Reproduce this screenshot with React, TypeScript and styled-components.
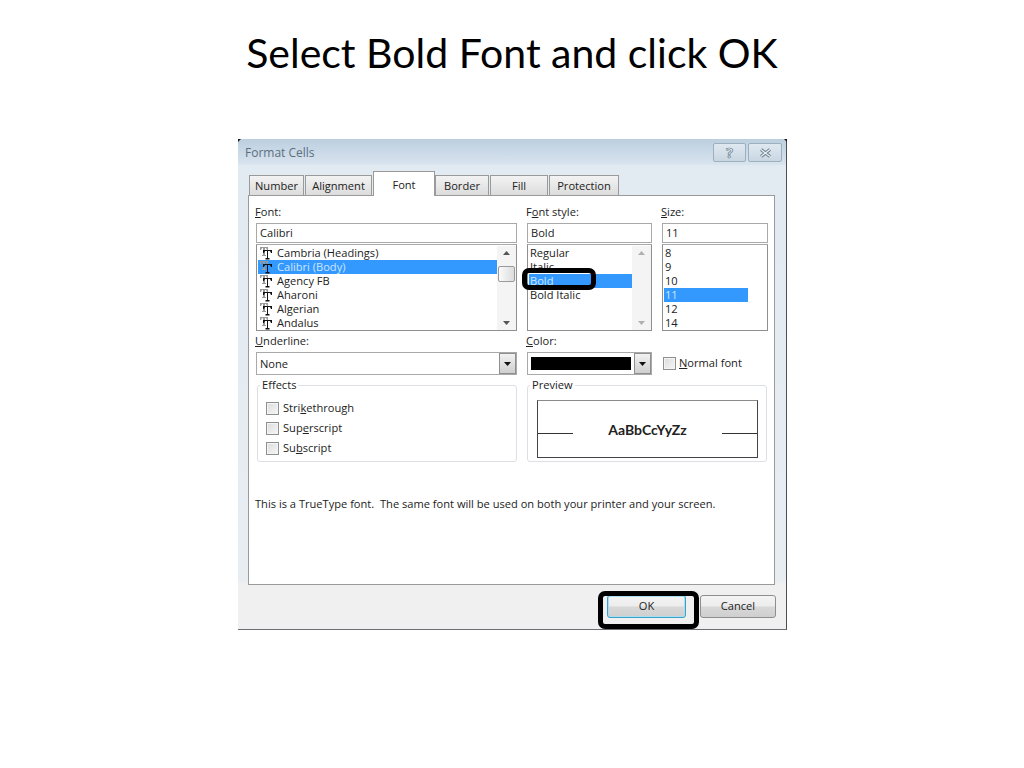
import React from "react";
import styled, { createGlobalStyle } from "styled-components";

const GlobalStyle = createGlobalStyle`
  html, body {
    margin: 0;
    padding: 0;
    background: #ffffff;
  }
`;

// Page
const Page = styled.div`
  width: 1024px;
  height: 768px;
  overflow: hidden;
  display: flex;
  flex-direction: column;
  align-items: center;
`;

const Title = styled.h1`
  margin: 0;
  height: 139px;
  padding-top: 25px;
  box-sizing: border-box;
  font: 400 41px/56px Lato, "Open Sans", sans-serif;
  color: #000000;
`;

// Dialog
const Dialog = styled.div`
  position: relative;
  width: 549px;
  height: 491px;
  box-sizing: border-box;
  margin-left: 1px;
  background: linear-gradient(#dfe8f1 0, #e2eaf2 34px, #e8edf2 440px, #f0f0f0 446px);
  border-right: 1px solid #4a4f55;
  border-bottom: 1px solid #6b6f73;
  font: 400 11.1px/14px "Open Sans", sans-serif;
  color: #222222;
  u {
    text-underline-offset: 1px;
  }
  /* the dark corner pixels left by the window capture */
  &::before,
  &::after {
    content: "";
    position: absolute;
    top: 0;
    width: 3px;
    height: 3px;
    background: #1c1c1c;
  }
  &::before {
    left: 0;
    clip-path: polygon(0 0, 100% 0, 0 100%);
  }
  &::after {
    right: -1px;
    clip-path: polygon(0 0, 100% 0, 100% 100%);
  }
`;

const TitleBar = styled.div`
  height: 26px;
  padding: 4px 4px 0 7px;
  display: flex;
  align-items: flex-start;
  justify-content: space-between;
  box-sizing: border-box;
  background: linear-gradient(#bccfe0, #d9e4ee);
`;

const DialogTitle = styled.div`
  font-size: 12px;
  line-height: 19px;
  color: #5a6f80;
`;

const CaptionButtons = styled.div`
  display: flex;
  gap: 2px;
`;

const CaptionButton = styled.div`
  width: ${(props: { $w: number }) => props.$w}px;
  height: 19px;
  box-sizing: border-box;
  display: flex;
  align-items: center;
  justify-content: center;
  border: 1px solid #9db0c0;
  border-radius: 2px;
  background: linear-gradient(#dfe8f0, #c9d7e3);
  font-weight: 700;
  font-size: 14px;
  color: #e8eef3;
  -webkit-text-stroke: 0.7px #66798a;
`;

// Tabs
const TabStrip = styled.div`
  height: 31px;
  margin-left: 11px;
  padding-top: 5px;
  box-sizing: border-box;
  display: flex;
  align-items: flex-end;
  position: relative;
  z-index: 1;
  margin-bottom: -1px;
`;

const Tab = styled.div<{ $w: number; $active?: boolean }>`
  width: ${(props) => props.$w}px;
  height: ${(props) => (props.$active ? 25 : 21)}px;
  box-sizing: border-box;
  display: flex;
  align-items: center;
  justify-content: center;
  border: 1px solid #9a9a9a;
  border-bottom: ${(props) => (props.$active ? "none" : "1px solid #9a9a9a")};
  padding-top: ${(props) => (props.$active ? 1 : 0)}px;
  margin-right: ${(props) => (props.$active ? 0 : 1)}px;
  background: ${(props) =>
    props.$active ? "#ffffff" : "linear-gradient(#f3f3f3, #dcdcdc)"};
`;

const Panel = styled.div`
  width: 527px;
  height: 390px;
  margin-left: 10px;
  padding: 9px 0 0 7px;
  box-sizing: border-box;
  background: #ffffff;
  border: 1px solid #9a9a9a;
`;

const FontGrid = styled.div`
  display: grid;
  grid-template-columns: 261px 125px 106px;
  column-gap: 10px;
`;

const Field = styled.div`
  display: flex;
  flex-direction: column;
`;

const FieldLabel = styled.div`
  height: 18px;
  margin-left: -1px;
`;

const TextBox = styled.div`
  height: 20px;
  box-sizing: border-box;
  padding: 2px 3px;
  margin-bottom: 1px;
  border: 1px solid #a9a9a9;
`;

const ListFrame = styled.div`
  position: relative;
  height: 87px;
  box-sizing: border-box;
  padding-top: 1px;
  display: flex;
  border: 1px solid #8f8f8f;
  border-top-color: #a9a9a9;
  margin-bottom: 3px;
`;

const Rows = styled.div`
  flex: 1;
  min-width: 0;
  margin-left: 1px;
  overflow: hidden;
`;

const Row = styled.div<{ $selected?: boolean; $right?: number }>`
  height: 14px;
  margin-right: ${(props) => props.$right ?? 0}px;
  padding-left: 1px;
  display: flex;
  align-items: center;
  gap: 4px;
  background: ${(props) => (props.$selected ? "#3399ff" : "transparent")};
  color: ${(props) => (props.$selected ? "#cfe6ff" : "#222222")};
`;

const ScrollBar = styled.div`
  width: 19px;
  display: flex;
  flex-direction: column;
  align-items: center;
  justify-content: space-between;
  padding: 5px 0;
  box-sizing: border-box;
  background: #f4f4f4;
  position: relative;
  color: ${(props: { $muted?: boolean }) => (props.$muted ? "#b0b0b0" : "#555555")};
`;

const Thumb = styled.div`
  position: absolute;
  top: 20px;
  left: 1px;
  width: 17px;
  height: 16px;
  box-sizing: border-box;
  border: 1px solid #9a9a9a;
  border-radius: 2px;
  background: linear-gradient(90deg, #fafafa, #dcdcdc);
`;

const Dropdown = styled.div`
  height: 23px;
  margin-bottom: 3px;
  padding-left: 3px;
  box-sizing: border-box;
  display: flex;
  align-items: center;
  justify-content: space-between;
  border: 1px solid #a9a9a9;
`;

const DropArrow = styled.div`
  width: 17px;
  align-self: stretch;
  display: flex;
  align-items: center;
  justify-content: center;
  box-sizing: border-box;
  border: 1px solid #8f8f8f;
  background: linear-gradient(#f2f2f2, #cfcfcf);
  color: #111111;
`;

const ColorSwatch = styled.div`
  flex: 1;
  height: 13px;
  margin-right: 3px;
  background: #000000;
`;

const CheckRow = styled.label`
  display: flex;
  align-items: center;
  gap: 4px;
  height: 14px;
`;

const CheckBox = styled.span`
  width: 13px;
  height: 13px;
  box-sizing: border-box;
  flex: none;
  border: 1px solid #8e8f8f;
  background: linear-gradient(135deg, #dcdcdc, #f6f6f6);
  box-shadow: inset 0 0 0 1px #f4f4f4;
`;

const NormalFont = styled(CheckRow)`
  margin: 22px 0 0 1px;
  gap: 3px;
`;

const GroupBox = styled.fieldset`
  margin: 0;
  padding: 0;
  height: 84px;
  box-sizing: border-box;
  border: 1px solid #dcdfe3;
  border-radius: 3px;
  min-width: 0;
  legend {
    margin-left: -7px;
    padding: 0 2px;
    line-height: 14px;
  }
`;

const EffectsBox = styled(GroupBox)`
  margin-left: 1px;
  width: 260px;
  display: flex;
  flex-direction: column;
  gap: 6px;
  padding: 9px 0 0 8px;
  legend {
    margin-left: -6px;
  }
`;

const PreviewColumn = styled.div`
  grid-column: span 2;
`;

const PreviewGroup = styled(GroupBox)`
  width: 240px;
  padding: 8px 8px 0 9px;
`;

const PreviewBox = styled.div`
  height: 58px;
  box-sizing: border-box;
  padding-top: 2px;
  display: flex;
  align-items: center;
  justify-content: space-between;
  border: 1px solid #444444;
  border-top-color: #8a8a8a;
`;

const PreviewLine = styled.span`
  width: 35px;
  height: 1px;
  margin-top: 7px;
  background: #333333;
`;

const PreviewText = styled.span`
  font: 700 14px/14px Lato, "Open Sans", sans-serif;
  color: #222222;
`;

const Note = styled.div`
  margin: 35px 0 0 -1px;
  white-space: pre;
`;

const Footer = styled.div`
  height: 44px;
  padding: 10px 10px 0 0;
  box-sizing: border-box;
  display: flex;
  justify-content: flex-end;
  gap: 14px;
`;

const PushButton = styled.div<{ $default?: boolean }>`
  position: relative;
  width: ${(props) => (props.$default ? 79 : 76)}px;
  height: 23px;
  padding-bottom: 1px;
  box-sizing: border-box;
  display: flex;
  align-items: center;
  justify-content: center;
  border: 1px solid ${(props) => (props.$default ? "#3c9fc8" : "#8e8e8e")};
  border-radius: 3px;
  background: linear-gradient(#f4f4f4 0, #ececec 48%, #d8d8d8 52%, #cfcfcf 100%);
  box-shadow: ${(props) => (props.$default ? "inset 0 0 0 1px #a8e0f2" : "none")};
`;

// Black call-outs drawn over the dialog
const Callout = styled.span`
  position: absolute;
  box-sizing: border-box;
  border: 5px solid #000000;
  border-radius: 7px;
  z-index: 2;
`;

const BoldCallout = styled(Callout)`
  left: -6px;
  top: 23px;
  width: 74px;
  height: 22px;
`;

const OkCallout = styled(Callout)`
  left: -10px;
  top: -5px;
  width: 101px;
  height: 38px;
`;

const ArrowUp = () => (
  <svg width="7" height="4" viewBox="0 0 7 4">
    <path d="M3.5 0L7 4H0z" fill="currentColor" />
  </svg>
);

const ArrowDown = () => (
  <svg width="7" height="4" viewBox="0 0 7 4">
    <path d="M0 0h7L3.5 4z" fill="currentColor" />
  </svg>
);

const TrueTypeIcon = () => (
  <svg width="14" height="14" viewBox="0 0 14 14">
    <path d="M1 1h8v3H8L7 2H6v7h1v1H3V9h1V2H3L2 4H1z" fill="#9a9a9a" />
    <path d="M4 4h9v3h-1l-1-2H9v7h1.5v1.5h-4V12H8V5H6L5 7H4z" fill="#111111" />
  </svg>
);

const fonts = ["Cambria (Headings)", "Calibri (Body)", "Agency FB", "Aharoni", "Algerian", "Andalus"];
const styles = ["Regular", "Italic", "Bold", "Bold Italic"];
const sizes = ["8", "9", "10", "11", "12", "14"];
const tabs = [
  { name: "Number", w: 55 },
  { name: "Alignment", w: 67 },
  { name: "Font", w: 62, active: true },
  { name: "Border", w: 54 },
  { name: "Fill", w: 58 },
  { name: "Protection", w: 70 },
];

function App() {
  return (
    <Page>
      <GlobalStyle />
      <Title>Select Bold Font and click OK</Title>
      <Dialog>
        <TitleBar>
          <DialogTitle>Format Cells</DialogTitle>
          <CaptionButtons>
            <CaptionButton $w={33}>?</CaptionButton>
            <CaptionButton $w={34}>
              <svg width="13" height="10" viewBox="0 0 13 10">
                <path d="M2 1.5l9 7M11 1.5l-9 7" stroke="#66798a" strokeWidth="3.2" fill="none" />
                <path d="M2 1.5l9 7M11 1.5l-9 7" stroke="#e8eef3" strokeWidth="1.4" fill="none" />
              </svg>
            </CaptionButton>
          </CaptionButtons>
        </TitleBar>
        <TabStrip>
          {tabs.map((tab) => (
            <Tab key={tab.name} $w={tab.w} $active={tab.active}>
              {tab.name}
            </Tab>
          ))}
        </TabStrip>
        <Panel>
          <FontGrid>
            <Field>
              <FieldLabel>
                <u>F</u>ont:
              </FieldLabel>
              <TextBox>Calibri</TextBox>
              <ListFrame>
                <Rows>
                  {fonts.map((name, i) => (
                    <Row key={name} $selected={i === 1}>
                      <TrueTypeIcon />
                      {name}
                    </Row>
                  ))}
                </Rows>
                <ScrollBar>
                  <ArrowUp />
                  <Thumb />
                  <ArrowDown />
                </ScrollBar>
              </ListFrame>
            </Field>
            <Field>
              <FieldLabel>
                F<u>o</u>nt style:
              </FieldLabel>
              <TextBox>Bold</TextBox>
              <ListFrame>
                <Rows>
                  {styles.map((name) => (
                    <Row key={name} $selected={name === "Bold"}>
                      {name}
                    </Row>
                  ))}
                </Rows>
                <ScrollBar $muted>
                  <ArrowUp />
                  <ArrowDown />
                </ScrollBar>
                <BoldCallout />
              </ListFrame>
            </Field>
            <Field>
              <FieldLabel>
                <u>S</u>ize:
              </FieldLabel>
              <TextBox>11</TextBox>
              <ListFrame>
                <Rows>
                  {sizes.map((name) => (
                    <Row key={name} $selected={name === "11"} $right={19}>
                      {name}
                    </Row>
                  ))}
                </Rows>
              </ListFrame>
            </Field>
            <Field>
              <FieldLabel>
                <u>U</u>nderline:
              </FieldLabel>
              <Dropdown>
                None
                <DropArrow>
                  <ArrowDown />
                </DropArrow>
              </Dropdown>
            </Field>
            <Field>
              <FieldLabel>
                <u>C</u>olor:
              </FieldLabel>
              <Dropdown>
                <ColorSwatch />
                <DropArrow>
                  <ArrowDown />
                </DropArrow>
              </Dropdown>
            </Field>
            <NormalFont>
              <CheckBox />
              <span>
                <u>N</u>ormal font
              </span>
            </NormalFont>
            <EffectsBox>
              <legend>Effects</legend>
              <CheckRow>
                <CheckBox />
                <span>
                  Stri<u>k</u>ethrough
                </span>
              </CheckRow>
              <CheckRow>
                <CheckBox />
                <span>
                  Sup<u>e</u>rscript
                </span>
              </CheckRow>
              <CheckRow>
                <CheckBox />
                <span>
                  Su<u>b</u>script
                </span>
              </CheckRow>
            </EffectsBox>
            <PreviewColumn>
              <PreviewGroup>
                <legend>Preview</legend>
                <PreviewBox>
                  <PreviewLine />
                  <PreviewText>AaBbCcYyZz</PreviewText>
                  <PreviewLine />
                </PreviewBox>
              </PreviewGroup>
            </PreviewColumn>
          </FontGrid>
          <Note>This is a TrueType font.  The same font will be used on both your printer and your screen.</Note>
        </Panel>
        <Footer>
          <PushButton $default>
            OK
            <OkCallout />
          </PushButton>
          <PushButton>Cancel</PushButton>
        </Footer>
      </Dialog>
    </Page>
  );
}

export default App;
